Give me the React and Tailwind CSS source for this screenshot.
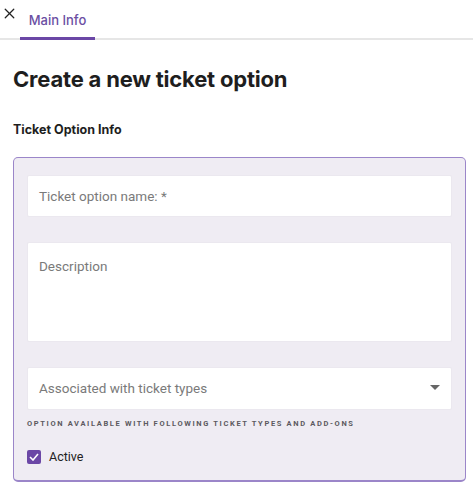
import { X } from "lucide-react"

const App = () => {
  return (
    <div className="w-[473px] h-[493px] bg-white font-['Roboto',sans-serif] overflow-hidden">
      {/* tabs */}
      <div className="flex items-end h-[40px] border-b-2 border-[#e6e6e6] relative">
        <button className="absolute left-[1px] top-[5px] text-[#222]">
          <X size={17} strokeWidth={1.8} />
        </button>
        <div className="ml-[20px] w-[75px] h-[38px] flex items-center justify-center border-b-[3px] border-[#6b47a6] -mb-[2px]">
          <span className="text-[13px] text-[#6b4fa3] font-['Inter',sans-serif] font-medium pt-[3px]">Main Info</span>
        </div>
      </div>

      <div className="pl-[13px] pr-[7px]">
        <h1 className="mt-[25px] text-[22px] leading-[28px] font-bold text-[#1e1e1e] font-['Inter',sans-serif] tracking-[-0.2px]">
          Create a new ticket option
        </h1>
        <h2 className="mt-[29px] text-[12.5px] leading-[16px] font-bold text-[#1e1e1e] font-['Inter',sans-serif]">
          Ticket Option Info
        </h2>

        <div className="mt-[19px] h-[325px] rounded-[5px] border border-[#9b86c9] border-b-2 bg-[#efecf3] pl-[13px] pr-[13px] pt-[17px]">
          <div className="h-[42px] bg-white rounded-[2px] border border-[#ebe8ef] flex items-center px-[11px]">
            <span className="text-[13.5px] text-[#7a7a7a]">Ticket option name: *</span>
          </div>
          <div className="mt-[25px] h-[100px] bg-white rounded-[2px] border border-[#ebe8ef] px-[11px] pt-[11px]">
            <span className="text-[13.5px] text-[#7a7a7a]">Description</span>
          </div>
          <div className="mt-[25px] h-[43px] bg-white rounded-[2px] border border-[#ebe8ef] flex items-center justify-between pl-[11px] pr-[11px]">
            <span className="text-[13.5px] text-[#7a7a7a]">Associated with ticket types</span>
            <svg width="10" height="5" viewBox="0 0 10 5" className="mb-[2px]">
              <path d="M0 0 L10 0 L5 5 Z" fill="#666" />
            </svg>
          </div>
          <p className="mt-[9px] text-[7.5px] leading-[10px] font-bold tracking-[1.65px] text-[#5c5a60]">
            OPTION AVAILABLE WITH FOLLOWING TICKET TYPES AND ADD-ONS
          </p>
          <div className="mt-[19px] flex items-center gap-[8px]">
            <div className="w-[14px] h-[14px] rounded-[2px] bg-[#6b47a6] flex items-center justify-center">
              <svg width="10" height="8" viewBox="0 0 10 8">
                <path d="M1 4 L4 7 L9 1" stroke="white" strokeWidth="1.6" fill="none" />
              </svg>
            </div>
            <span className="text-[12.5px] text-[#222]">Active</span>
          </div>
        </div>
      </div>
    </div>
  )
}

export default App
